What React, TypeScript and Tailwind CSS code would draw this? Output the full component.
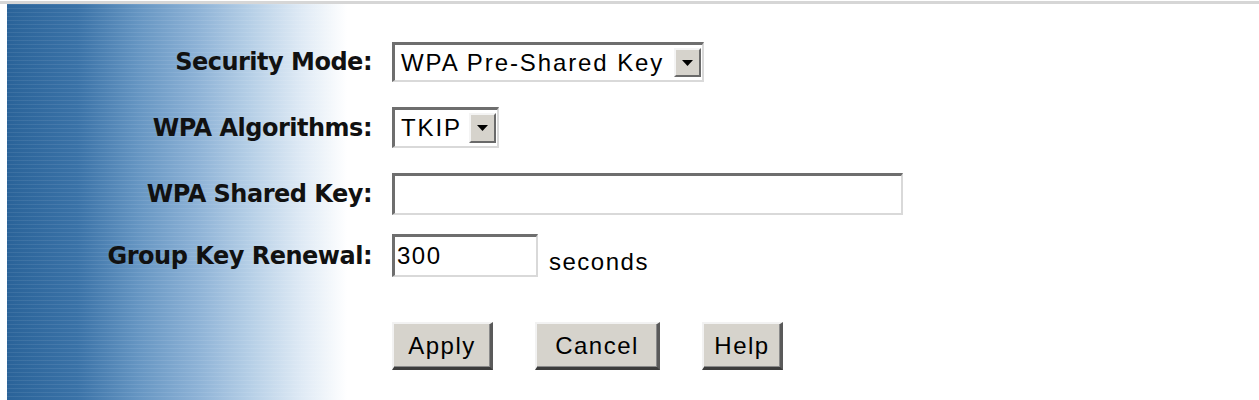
import React from "react";

const labelCls =
  "text-right pr-[20px] text-[24px] tracking-[-0.5px] font-bold text-[#111] leading-none whitespace-nowrap font-['DejaVu_Sans',sans-serif]";
const ctrlText =
  "text-[24px] leading-none tracking-[1.5px] text-black font-['Liberation_Sans',Arial,sans-serif]";
const inset =
  "bg-white border-t-[3px] border-l-[3px] border-b-2 border-r-2 border-t-[#6e6e6e] border-l-[#6e6e6e] border-b-[#d9d9d9] border-r-[#d9d9d9]";

function DropBtn() {
  return (
    <div className="w-[27px] self-stretch my-[3px] mr-[1px] flex items-center justify-center bg-[#d6d3cc] border-t-2 border-l-2 border-t-[#f4f4f4] border-l-[#f4f4f4] border-b-2 border-r-2 border-b-[#6a6a6a] border-r-[#6a6a6a]">
      <svg width="11" height="6" viewBox="0 0 11 6">
        <path d="M0 0 H11 L5.5 6 Z" fill="#000" />
      </svg>
    </div>
  );
}

function Select({ value, width }: { value: string; width: string }) {
  return (
    <div className={`${inset} ${width} h-full flex items-center`}>
      <span className={`${ctrlText} tracking-[1.9px] flex-1 pl-[6px]`}>{value}</span>
      <DropBtn />
    </div>
  );
}

function Button({ children, width }: { children: React.ReactNode; width: string }) {
  return (
    <div
      className={`${width} h-full flex items-center justify-center bg-[#d6d3cc] border-t-2 border-l-2 border-t-[#f2f2f2] border-l-[#f2f2f2] border-b-[3px] border-r-[3px] border-b-[#3c3c3c] border-r-[#5a5a5a] shadow-[inset_-1px_-1px_0_#8a8a8a]`}
    >
      <span className={ctrlText}>{children}</span>
    </div>
  );
}

export default function App() {
  return (
    <div className="w-[1259px] h-[400px] bg-white overflow-hidden pt-[1px]">
      <div className="h-[3px] bg-[#d6d6d6]" />
      <div className="ml-[7px] h-[396px] pt-[38px] bg-[repeating-linear-gradient(180deg,rgba(255,255,255,0.08)_0px,rgba(255,255,255,0.08)_1px,transparent_1px,transparent_4px),linear-gradient(90deg,#2a6399_0px,#3a72a7_70px,#6595c2_130px,#8db2d6_190px,#b7d0e7_245px,#dfeaf5_295px,#ffffff_340px)]">
        <div className="grid grid-cols-[385px_1fr] items-center h-[40px]">
          <div className={labelCls}>Security Mode:</div>
          <Select value="WPA Pre-Shared Key" width="w-[312px]" />
        </div>
        <div className="grid grid-cols-[385px_1fr] items-center h-[41px] mt-[25px]">
          <div className={labelCls}>WPA Algorithms:</div>
          <Select value="TKIP" width="w-[107px]" />
        </div>
        <div className="grid grid-cols-[385px_1fr] items-center h-[42px] mt-[25px]">
          <div className={labelCls}>WPA Shared Key:</div>
          <div className={`${inset} w-[511px] h-full`} />
        </div>
        <div className="grid grid-cols-[385px_1fr] items-center h-[43px] mt-[19px]">
          <div className={labelCls}>Group Key Renewal:</div>
          <div className="flex items-center h-full">
            <div className={`${inset} w-[146px] h-full flex items-center`}>
              <span className={`${ctrlText} pl-[2px]`}>300</span>
            </div>
            <span className={`${ctrlText} ml-[11px] mt-[12px] text-[#222]`}>seconds</span>
          </div>
        </div>
        <div className="grid grid-cols-[385px_1fr] items-center h-[48px] mt-[45px]">
          <div />
          <div className="flex h-full gap-[42px]">
            <Button width="w-[101px]">Apply</Button>
            <Button width="w-[125px]">Cancel</Button>
            <Button width="w-[81px]">Help</Button>
          </div>
        </div>
      </div>
    </div>
  );
}
